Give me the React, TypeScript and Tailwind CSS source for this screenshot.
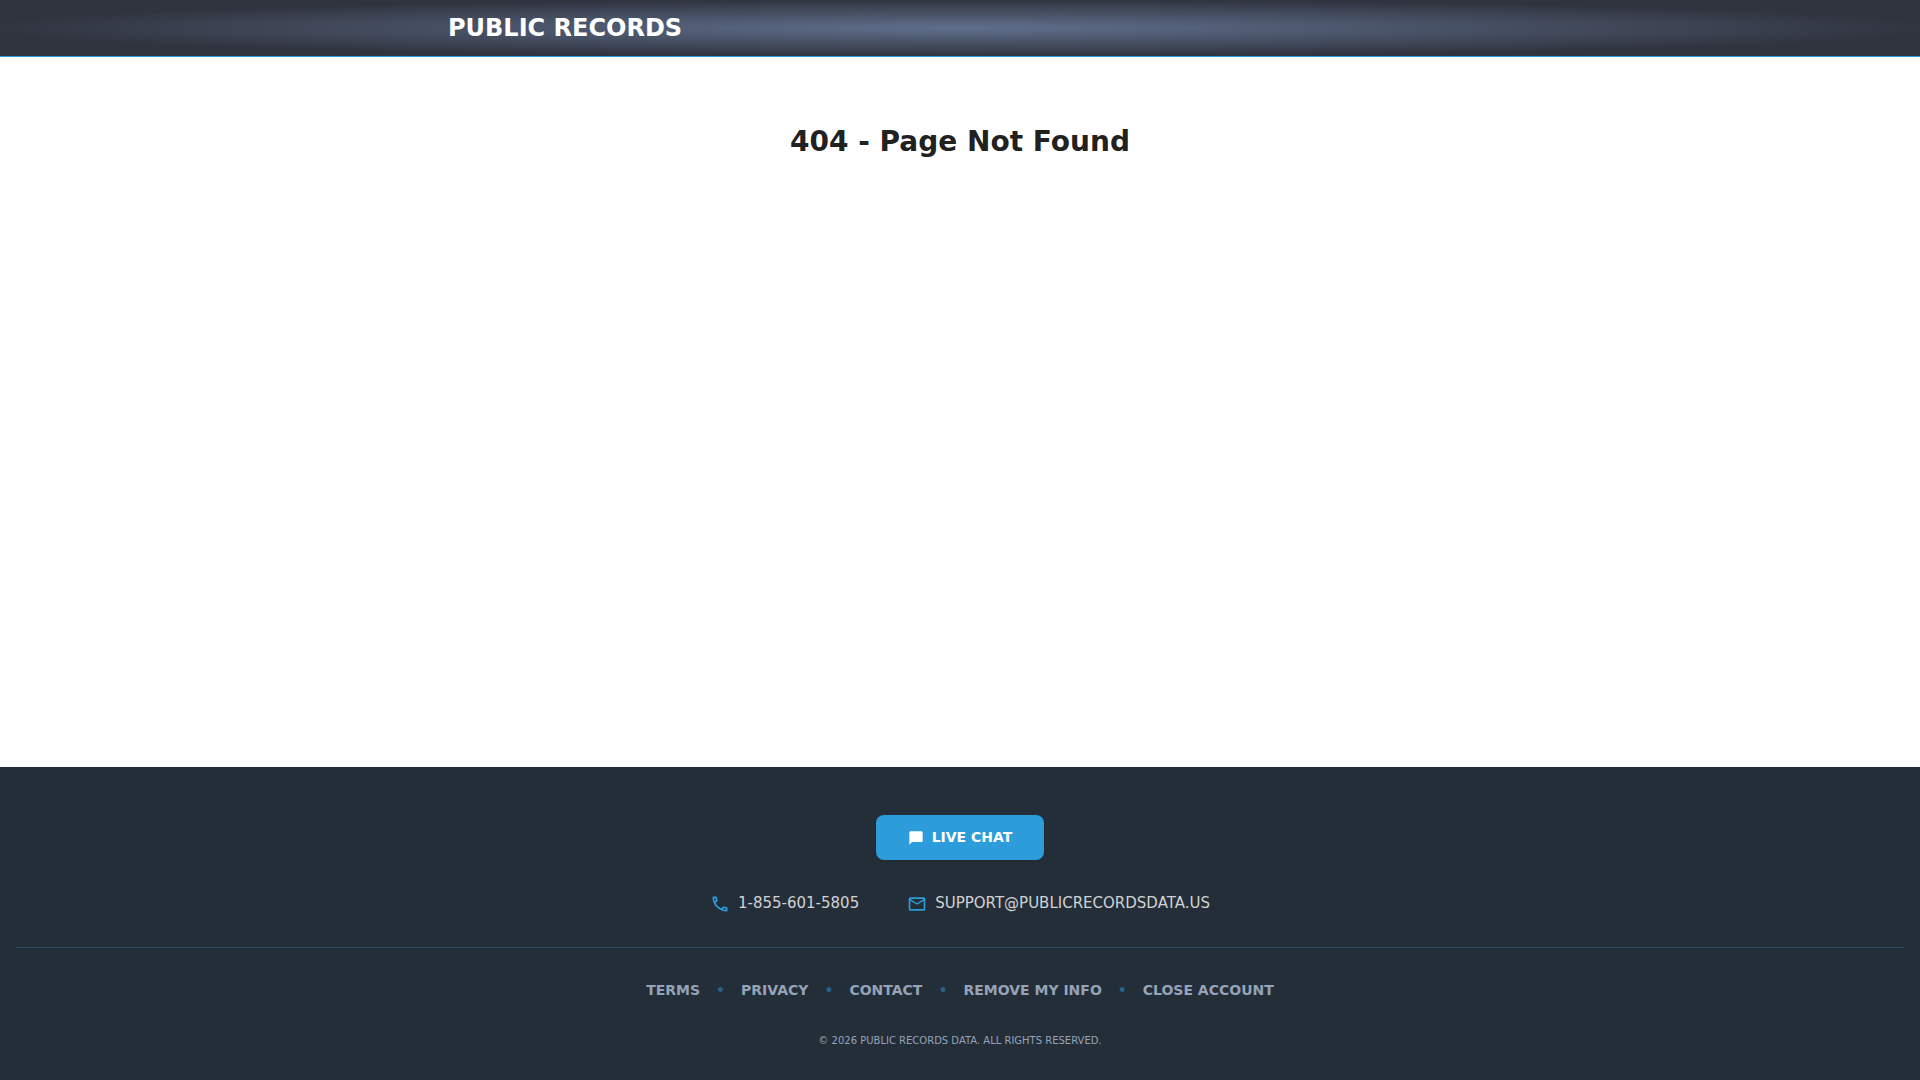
import React from "react";
import { MdChatBubble, MdOutlinePhone, MdMailOutline } from "react-icons/md";

const links = ["Terms", "Privacy", "Contact", "Remove My Info", "Close Account"];

export default function App() {
  return (
    <div className="flex min-h-screen flex-col bg-white font-['DejaVu_Sans',sans-serif] text-[#212121]">
      <header className="border-b border-[#2d9cdb] bg-[radial-gradient(#5f6f8c,#30343f_72%)]">
        <div className="mx-auto flex h-14 max-w-5xl items-center">
          <a href="#" className="text-2xl font-bold text-white">PUBLIC RECORDS</a>
        </div>
      </header>
      <main className="grow pt-16">
        <h1 className="text-center text-[28px] leading-[42px] font-bold">404 - Page Not Found</h1>
      </main>
      <footer className="flex flex-col items-center bg-[#242e38] px-4 pt-12 pb-[30px] uppercase">
        <button className="flex items-end gap-2 rounded-lg bg-[#2d9cdb] px-8 pt-[13px] pb-3.5 text-sm leading-[18px] font-bold text-white uppercase shadow-sm">
          <MdChatBubble size={16} />
          Live Chat
        </button>
        <div className="mt-8 flex gap-12 text-[15px] leading-[22px] text-[#d0d2d5]">
          <a href="tel:18556015805" className="flex items-end gap-2"><MdOutlinePhone size={20} className="text-[#2d9cdb]" />1-855-601-5805</a>
          <a href="mailto:support@publicrecordsdata.us" className="flex items-end gap-2"><MdMailOutline size={20} className="text-[#2d9cdb]" />support@publicrecordsdata.us</a>
        </div>
        <hr className="mt-[33px] w-full border-[#304a60]" />
        <nav className="mt-8 flex items-center gap-4 text-sm font-bold text-[#94a3b8]">
          {links.map((label, i) => (
            <React.Fragment key={label}>
              {i > 0 && <span className="text-[#29618a]">•</span>}
              <a href="#">{label}</a>
            </React.Fragment>
          ))}
        </nav>
        <p className="mt-8 text-[10px] leading-[18px] text-[#94a3b8]">© 2026 Public Records Data. All rights reserved.</p>
      </footer>
    </div>
  );
}
